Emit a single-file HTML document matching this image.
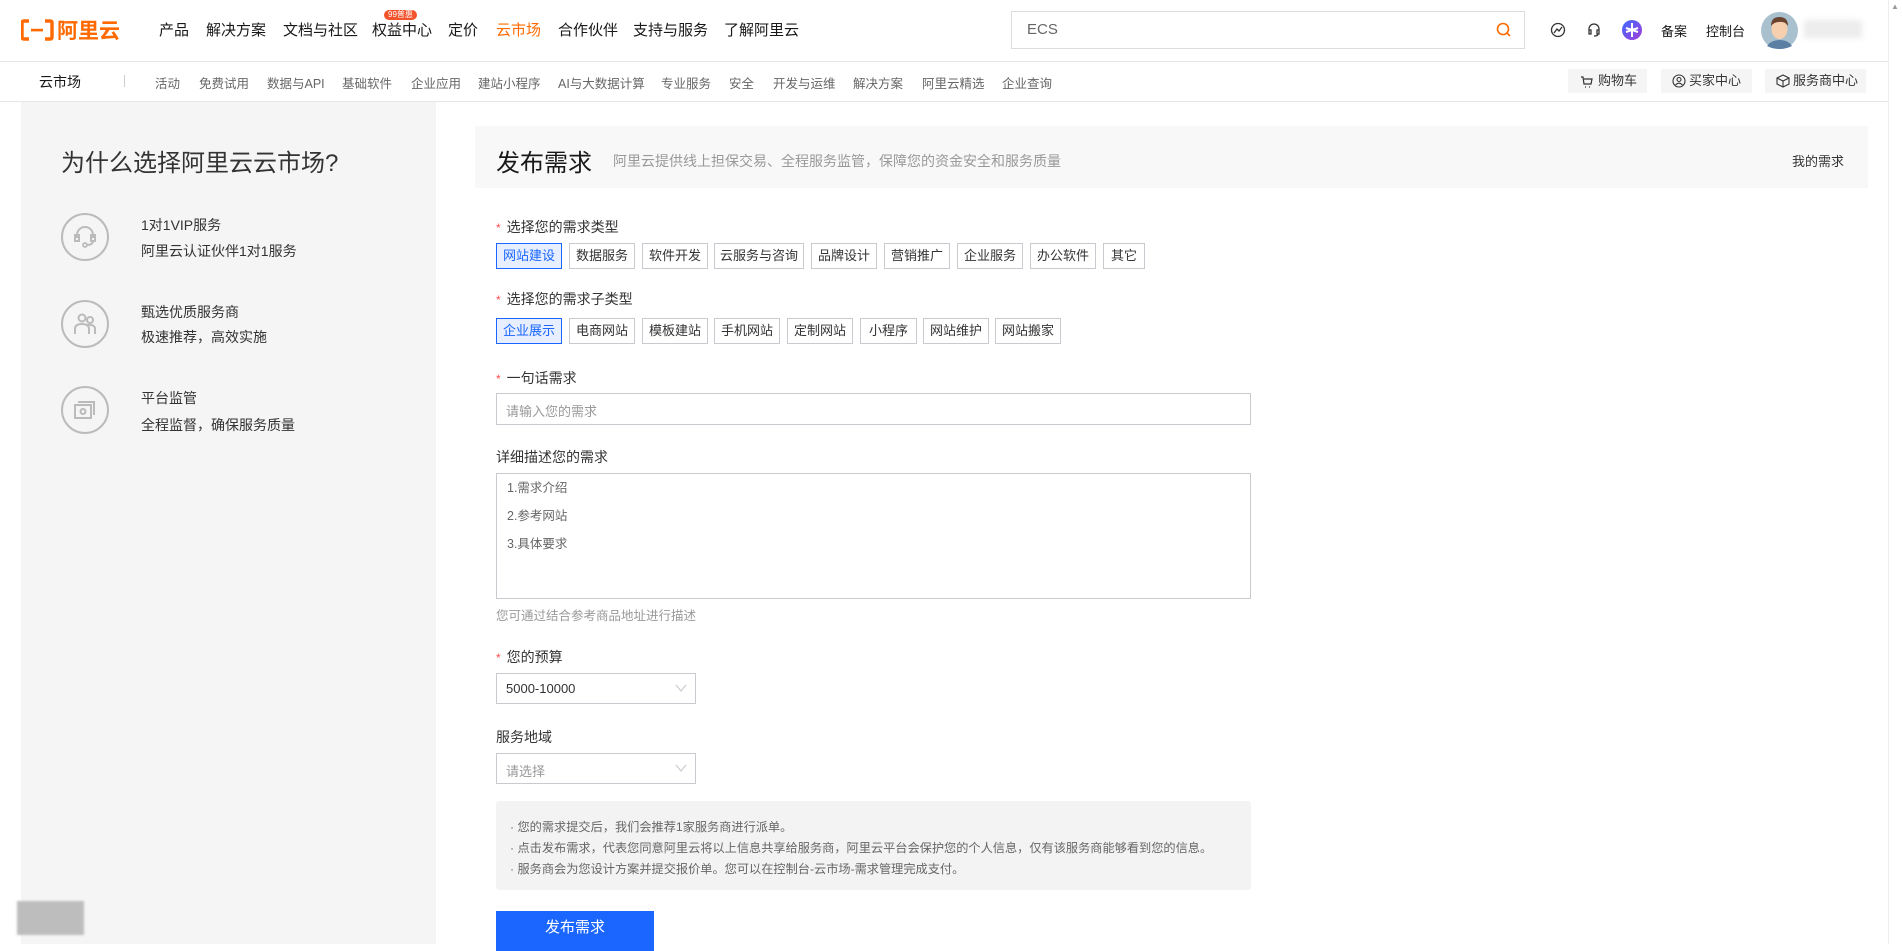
<!DOCTYPE html>
<html><head><meta charset="utf-8">
<style>
*{margin:0;padding:0;box-sizing:border-box}
body{width:1902px;height:944px;overflow:hidden;background:#fff;font-family:"Liberation Sans","Noto Sans CJK SC",sans-serif;color:#333;position:relative}
.a{position:absolute;white-space:nowrap}
.nav{font-size:15px;color:#181818;top:19px}
.sub{font-size:12.5px;color:#666;top:73px}
.rbtn{position:absolute;top:69px;height:24px;background:#f5f5f5;font-size:13px;color:#333;line-height:24px;padding-left:28px}
.lbl{font-size:14px;color:#333}
.lbl i{color:#ff4d4f;font-style:normal;margin-right:6px;font-size:12px}
.btn{position:absolute;height:26px;border:1px solid #c9c9cf;font-size:13px;line-height:24px;text-align:center;color:#333;background:#fff}
.btn.on{border-color:#1a66ff;background:#e6eeff;color:#1a66ff}
.box{position:absolute;border:1px solid #c9c9cf;background:#fff}
.circ{position:absolute;left:61px;width:48px;height:48px;border:2px solid #bbb;border-radius:50%}
</style></head><body>
<svg class="a" style="left:21px;top:19px" width="104" height="22" viewBox="0 0 104 22">
<path d="M8 2H3Q1 2 1 4V18Q1 20 3 20H8M24 2H29Q31 2 31 4V18Q31 20 29 20H24" fill="none" stroke="#ff6a00" stroke-width="3.4"/>
<rect x="10" y="9.8" width="12" height="2.6" fill="#ff6a00"/>
<text x="36" y="19" font-size="21" font-weight="bold" fill="#ff6a00" font-family="Noto Sans CJK SC">阿里云</text>
</svg>
<div class="a nav" style="left:159px">产品</div>
<div class="a nav" style="left:206px">解决方案</div>
<div class="a nav" style="left:283px">文档与社区</div>
<div class="a nav" style="left:372px">权益中心</div>
<div class="a" style="left:384px;top:10px;height:10px;padding:0 4px;background:#f2532b;color:#fff;font-size:8px;line-height:10px;border-radius:5px">99普惠</div>
<div class="a nav" style="left:448px">定价</div>
<div class="a nav" style="left:496px;color:#ff6a00">云市场</div>
<div class="a nav" style="left:558px">合作伙伴</div>
<div class="a nav" style="left:633px">支持与服务</div>
<div class="a nav" style="left:724px">了解阿里云</div>
<div class="box" style="left:1011px;top:11px;width:514px;height:38px;border-color:#ddd"></div>
<div class="a" style="left:1027px;top:21px;font-size:15px;color:#666">ECS</div>
<svg class="a" style="left:1496px;top:22px" width="16" height="16"><circle cx="7" cy="7" r="5.5" fill="none" stroke="#ff6a00" stroke-width="1.6"/><path d="M11 11L14 14" stroke="#ff6a00" stroke-width="1.6"/></svg>
<svg class="a" style="left:1550px;top:22px" width="16" height="16"><circle cx="8" cy="8" r="6.5" fill="none" stroke="#333" stroke-width="1.3"/><path d="M4 11L7 7L9 9L12 5" fill="none" stroke="#333" stroke-width="1.3"/></svg>
<svg class="a" style="left:1586px;top:22px" width="16" height="16"><path d="M3 9V7A5 5 0 0 1 13 7V9M3 8h2v4H3zM11 8h2v4h-2zM12 12Q12 14 8 14" fill="none" stroke="#333" stroke-width="1.3"/></svg>
<svg class="a" style="left:1621px;top:19px" width="22" height="22"><defs><linearGradient id="g" x1="0" y1="0" x2="1" y2="1"><stop offset="0" stop-color="#3d6bff"/><stop offset="1" stop-color="#a23ed8"/></linearGradient></defs><circle cx="11" cy="11" r="10" fill="url(#g)"/><path d="M11 4V18M5 9L17 13M5 13L17 9" stroke="#fff" stroke-width="2"/></svg>
<div class="a" style="left:1661px;top:21px;font-size:13px;color:#181818">备案</div>
<div class="a" style="left:1706px;top:21px;font-size:13px;color:#181818">控制台</div>
<svg class="a" style="left:1761px;top:12px" width="37" height="37"><circle cx="18.5" cy="18.5" r="18.5" fill="#a9c1cf"/><ellipse cx="18.5" cy="17" rx="8" ry="10" fill="#f5cfae"/><path d="M10 14Q10 5 18.5 5Q27 5 27 14Q24 9 18 10Q13 10 10 14Z" fill="#6b4430"/><path d="M6 34Q10 28 18.5 28Q27 28 31 34Q25 37 18.5 37Q12 37 6 34Z" fill="#5a7fa3"/></svg>
<div class="a" style="left:1804px;top:20px;width:58px;height:18px;background:#ececec;filter:blur(3px)"></div>
<div class="a" style="left:0;top:61px;width:1902px;height:1px;background:#e5e5e5"></div>
<div class="a" style="left:39px;top:72px;font-size:14px;color:#181818">云市场</div>
<div class="a" style="left:124px;top:75px;width:1px;height:12px;background:#ccc"></div>
<div class="a sub" style="left:155px">活动</div>
<div class="a sub" style="left:199px">免费试用</div>
<div class="a sub" style="left:267px">数据与API</div>
<div class="a sub" style="left:342px">基础软件</div>
<div class="a sub" style="left:411px">企业应用</div>
<div class="a sub" style="left:478px">建站小程序</div>
<div class="a sub" style="left:558px">AI与大数据计算</div>
<div class="a sub" style="left:661px">专业服务</div>
<div class="a sub" style="left:729px">安全</div>
<div class="a sub" style="left:773px">开发与运维</div>
<div class="a sub" style="left:853px">解决方案</div>
<div class="a sub" style="left:922px">阿里云精选</div>
<div class="a sub" style="left:1002px">企业查询</div>
<div class="rbtn" style="left:1568px;width:79px;padding-left:30px">购物车</div>
<svg class="a" style="left:1580px;top:75px" width="13" height="13"><path d="M1 2H3L4 9H11L12 4H4M5 12h1M9 12h1" fill="none" stroke="#333" stroke-width="1.2"/></svg>
<div class="rbtn" style="left:1661px;width:91px">买家中心</div>
<svg class="a" style="left:1672px;top:74px" width="14" height="14"><circle cx="7" cy="7" r="6" fill="none" stroke="#333" stroke-width="1.1"/><circle cx="7" cy="5.5" r="2" fill="none" stroke="#333" stroke-width="1.1"/><path d="M3.5 11Q7 7.5 10.5 11" fill="none" stroke="#333" stroke-width="1.1"/></svg>
<div class="rbtn" style="left:1765px;width:101px">服务商中心</div>
<svg class="a" style="left:1776px;top:74px" width="14" height="14"><path d="M7 1L13 4V10L7 13L1 10V4ZM1 4L7 7L13 4M7 7V13" fill="none" stroke="#333" stroke-width="1.1"/></svg>
<div class="a" style="left:0;top:101px;width:1902px;height:1px;background:#e5e5e5"></div>
<div class="a" style="left:1888px;top:0;width:14px;height:944px;background:#fff;border-left:1px solid #eee"></div>
<div class="a" style="left:1891px;top:2px;font-size:8px;color:#999">▲</div>
<div class="a" style="left:21px;top:102px;width:415px;height:842px;background:#f5f5f5"></div>
<div class="a" style="left:61px;top:143px;font-size:24px;color:#333">为什么选择阿里云云市场?</div>
<div class="circ" style="top:213px"></div>
<svg class="a" style="left:71px;top:223px" width="28" height="28"><path d="M6 15V12A8 8 0 0 1 22 12V15M4 12h4v6H4zM20 12h4v6h-4zM22 18Q22 22 15 22" fill="none" stroke="#bbb" stroke-width="2"/><circle cx="14" cy="22" r="2" fill="none" stroke="#bbb" stroke-width="1.8"/></svg>
<div class="a" style="left:141px;top:215px;font-size:14px">1对1VIP服务</div>
<div class="a" style="left:141px;top:241px;font-size:14px">阿里云认证伙伴1对1服务</div>
<div class="circ" style="top:300px"></div>
<svg class="a" style="left:71px;top:310px" width="28" height="28"><circle cx="11" cy="8" r="3.5" fill="none" stroke="#bbb" stroke-width="2"/><circle cx="19" cy="10" r="3" fill="none" stroke="#bbb" stroke-width="2"/><path d="M4 24V19Q4 14 11 14Q18 14 18 19V24M16 15Q24 14 24 19V24" fill="none" stroke="#bbb" stroke-width="2"/></svg>
<div class="a" style="left:141px;top:302px;font-size:14px">甄选优质服务商</div>
<div class="a" style="left:141px;top:327px;font-size:14px">极速推荐，高效实施</div>
<div class="circ" style="top:386px"></div>
<svg class="a" style="left:71px;top:396px" width="28" height="28"><rect x="4" y="9" width="16" height="13" fill="none" stroke="#bbb" stroke-width="2"/><path d="M7 6H23V19" fill="none" stroke="#bbb" stroke-width="2"/><circle cx="12" cy="15.5" r="2.5" fill="none" stroke="#bbb" stroke-width="2"/></svg>
<div class="a" style="left:141px;top:388px;font-size:14px">平台监管</div>
<div class="a" style="left:141px;top:415px;font-size:14px">全程监督，确保服务质量</div>
<div class="a" style="left:475px;top:126px;width:1393px;height:62px;background:#f8f8f8"></div>
<div class="a" style="left:496px;top:143px;font-size:24px;color:#181818">发布需求</div>
<div class="a" style="left:613px;top:151px;font-size:14px;color:#999">阿里云提供线上担保交易、全程服务监管，保障您的资金安全和服务质量</div>
<div class="a" style="left:1792px;top:151px;font-size:13px;color:#333">我的需求</div>
<div class="a lbl" style="left:496px;top:217px"><i>*</i>选择您的需求类型</div>
<div class="btn on" style="left:496px;top:243px;width:66px">网站建设</div>
<div class="btn" style="left:569px;top:243px;width:66px">数据服务</div>
<div class="btn" style="left:642px;top:243px;width:66px">软件开发</div>
<div class="btn" style="left:714px;top:243px;width:90px">云服务与咨询</div>
<div class="btn" style="left:811px;top:243px;width:66px">品牌设计</div>
<div class="btn" style="left:884px;top:243px;width:66px">营销推广</div>
<div class="btn" style="left:957px;top:243px;width:66px">企业服务</div>
<div class="btn" style="left:1030px;top:243px;width:66px">办公软件</div>
<div class="btn" style="left:1103px;top:243px;width:42px">其它</div>
<div class="a lbl" style="left:496px;top:289px"><i>*</i>选择您的需求子类型</div>
<div class="btn on" style="left:496px;top:318px;width:66px">企业展示</div>
<div class="btn" style="left:569px;top:318px;width:66px">电商网站</div>
<div class="btn" style="left:642px;top:318px;width:66px">模板建站</div>
<div class="btn" style="left:714px;top:318px;width:66px">手机网站</div>
<div class="btn" style="left:787px;top:318px;width:66px">定制网站</div>
<div class="btn" style="left:860px;top:318px;width:57px">小程序</div>
<div class="btn" style="left:923px;top:318px;width:66px">网站维护</div>
<div class="btn" style="left:995px;top:318px;width:66px">网站搬家</div>
<div class="a lbl" style="left:496px;top:368px"><i>*</i>一句话需求</div>
<div class="box" style="left:496px;top:393px;width:755px;height:32px"></div>
<div class="a" style="left:506px;top:401px;font-size:13px;color:#999">请输入您的需求</div>
<div class="a lbl" style="left:496px;top:447px">详细描述您的需求</div>
<div class="box" style="left:496px;top:473px;width:755px;height:126px"></div>
<div class="a" style="left:507px;top:477px;font-size:12.5px;color:#666">1.需求介绍</div>
<div class="a" style="left:507px;top:505px;font-size:12.5px;color:#666">2.参考网站</div>
<div class="a" style="left:507px;top:533px;font-size:12.5px;color:#666">3.具体要求</div>
<div class="a" style="left:496px;top:605px;font-size:12.5px;color:#999">您可通过结合参考商品地址进行描述</div>
<div class="a lbl" style="left:496px;top:647px"><i>*</i>您的预算</div>
<div class="box" style="left:496px;top:673px;width:200px;height:31px"></div>
<div class="a" style="left:506px;top:681px;font-size:13px;color:#333">5000-10000</div>
<svg class="a" style="left:675px;top:684px" width="12" height="9"><path d="M1 1L6 7L11 1" fill="none" stroke="#ccc" stroke-width="1.2"/></svg>
<div class="a lbl" style="left:496px;top:727px">服务地域</div>
<div class="box" style="left:496px;top:753px;width:200px;height:31px"></div>
<div class="a" style="left:506px;top:761px;font-size:13px;color:#999">请选择</div>
<svg class="a" style="left:675px;top:764px" width="12" height="9"><path d="M1 1L6 7L11 1" fill="none" stroke="#ccc" stroke-width="1.2"/></svg>
<div class="a" style="left:496px;top:801px;width:755px;height:89px;background:#f3f3f3;border-radius:3px"></div>
<div class="a" style="left:510px;top:817px;font-size:12.2px;color:#666">· 您的需求提交后，我们会推荐1家服务商进行派单。</div>
<div class="a" style="left:510px;top:838px;font-size:12.2px;color:#666">· 点击发布需求，代表您同意阿里云将以上信息共享给服务商，阿里云平台会保护您的个人信息，仅有该服务商能够看到您的信息。</div>
<div class="a" style="left:510px;top:859px;font-size:12.2px;color:#666">· 服务商会为您设计方案并提交报价单。您可以在控制台-云市场-需求管理完成支付。</div>
<div class="a" style="left:496px;top:911px;width:158px;height:40px;background:#1a66ff;color:#fff;font-size:15px;text-align:center;line-height:34px">发布需求</div>
<div class="a" style="left:17px;top:901px;width:67px;height:34px;background:#bdbdbd;filter:blur(1px)"></div>
</body></html>
